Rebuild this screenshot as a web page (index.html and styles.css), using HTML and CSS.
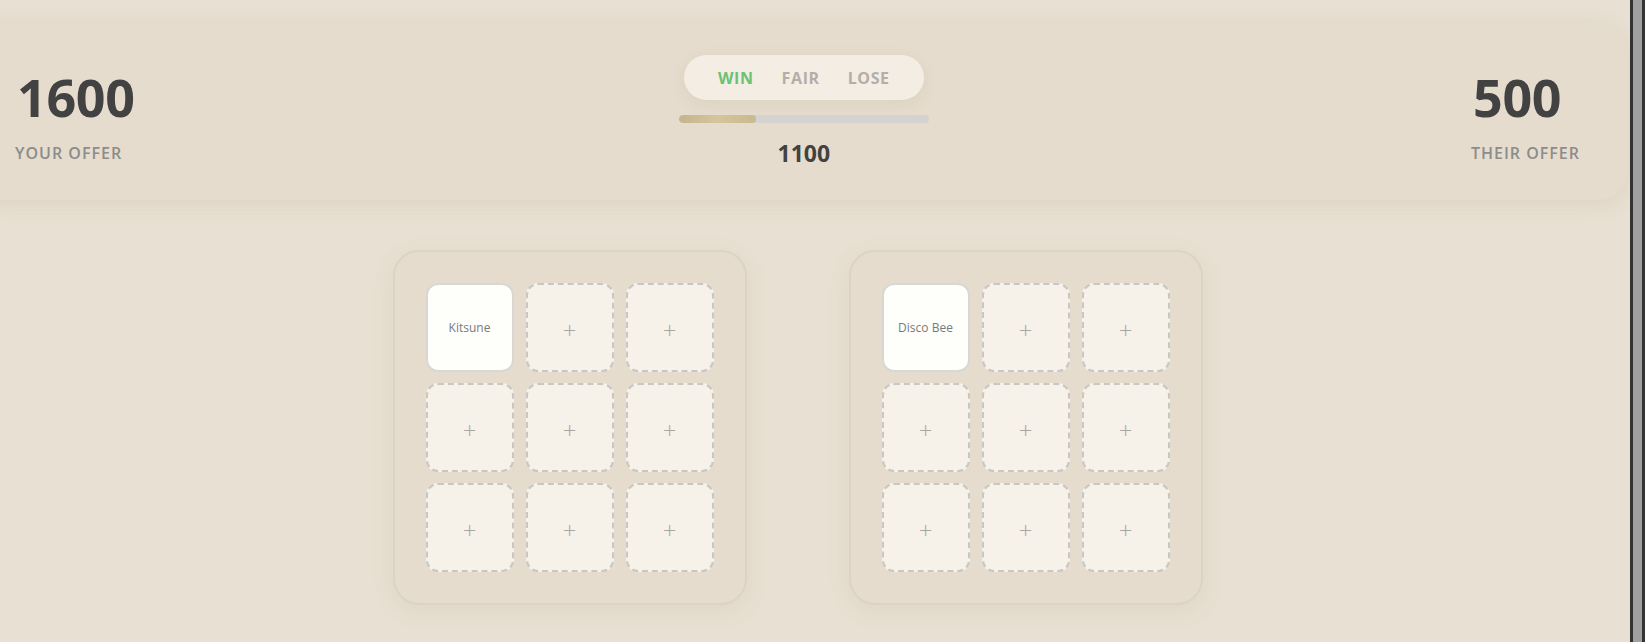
FILE: index.html
```html
<!DOCTYPE html>
<html lang="en">
<head>
<meta charset="utf-8">
<title>Trade</title>
<link rel="stylesheet" href="styles.css">
</head>
<body>
<div class="app">
  <header class="offer-card">
    <div class="offer">
      <div class="offer-value">1600</div>
      <div class="offer-label">YOUR OFFER</div>
    </div>
    <div class="verdict">
      <div class="pill">
        <span class="pill-item win">WIN</span>
        <span class="pill-item">FAIR</span>
        <span class="pill-item">LOSE</span>
      </div>
      <div class="bar"><div class="bar-fill" style="width:31%"></div></div>
      <div class="diff">1100</div>
    </div>
    <div class="offer">
      <div class="offer-value">500</div>
      <div class="offer-label">THEIR OFFER</div>
    </div>
  </header>
  <main class="boards">
    <section class="board">
      <div class="cell filled">Kitsune</div>
      <div class="cell">+</div>
      <div class="cell">+</div>
      <div class="cell">+</div>
      <div class="cell">+</div>
      <div class="cell">+</div>
      <div class="cell">+</div>
      <div class="cell">+</div>
      <div class="cell">+</div>
    </section>
    <section class="board">
      <div class="cell filled">Disco Bee</div>
      <div class="cell">+</div>
      <div class="cell">+</div>
      <div class="cell">+</div>
      <div class="cell">+</div>
      <div class="cell">+</div>
      <div class="cell">+</div>
      <div class="cell">+</div>
      <div class="cell">+</div>
    </section>
  </main>
</div>
<div class="edge"></div>
</body>
</html>
```
FILE: styles.css
```css
html, body {
  margin: 0;
  padding: 0;
  height: 100%;
}
body {
  display: flex;
  background: #e8e0d2;
  font-family: "Open Sans", "Noto Sans", sans-serif;
  overflow: hidden;
}
.app {
  flex: 1;
  margin-left: -33px;
  margin-right: 2px;
  min-width: 0;
}
.edge {
  width: 9px;
  flex: none;
  height: 100%;
  background: #a0a0a0;
  border-left: 3px solid #333333;
  border-right: 3px solid #333333;
}
.offer-card {
  margin-top: 23px;
  background: #e5dccd;
  border-radius: 30px;
  padding: 32px 48px 35px 50px;
  display: flex;
  justify-content: space-between;
  align-items: flex-start;
  box-shadow: 0 4px 22px rgba(120, 100, 70, 0.10);
}
.offer {
  margin-top: 16px;
  display: flex;
  flex-direction: column;
  align-items: flex-start;
}
.offer-value {
  font-size: 52px;
  line-height: 52px;
  font-weight: 700;
  color: #424242;
  letter-spacing: -0.3px;
}
.offer-label {
  margin-top: 22px;
  font-size: 16px;
  line-height: 16px;
  font-weight: 600;
  color: #8c8c8c;
  letter-spacing: 1px;
  margin-left: -2px;
}
.verdict {
  width: 250px;
  display: flex;
  flex-direction: column;
  align-items: center;
}
.pill {
  height: 45px;
  padding: 0 34px;
  border-radius: 23px;
  background: #f3ede3;
  display: flex;
  align-items: center;
  gap: 28px;
  box-shadow: 0 4px 16px rgba(120, 100, 70, 0.08);
}
.pill-item {
  font-size: 16px;
  font-weight: 700;
  letter-spacing: 0.6px;
  color: #b3aea8;
}
.pill-item.win {
  color: #6cc172;
}
.bar {
  margin-top: 15px;
  width: 250px;
  height: 8px;
  border-radius: 4px;
  background: #d4d3d1;
  overflow: hidden;
}
.bar-fill {
  height: 100%;
  border-radius: 4px;
  background: linear-gradient(90deg, #c6b58c, #d6c59c 50%, #c9b98f);
}
.diff {
  margin-top: 19px;
  font-size: 23px;
  line-height: 23px;
  font-weight: 700;
  color: #424242;
}
.boards {
  margin-top: 50px;
  display: flex;
  justify-content: center;
  gap: 102px;
}
.board {
  display: grid;
  grid-template-columns: repeat(3, 88px);
  grid-auto-rows: 89px;
  column-gap: 12px;
  row-gap: 11px;
  padding: 31px;
  border: 2px solid #dcd3c4;
  border-radius: 26px;
  background: #e5dccd;
  box-shadow: 0 6px 24px rgba(120, 100, 70, 0.08);
}
.cell {
  box-sizing: border-box;
  border: 2px dashed #c9c7c3;
  border-radius: 12px;
  background: #f6f2e9;
  display: flex;
  align-items: center;
  justify-content: center;
  font-size: 24px;
  font-weight: 300;
  color: #a9a7a3;
  padding-top: 4px;
}
.cell.filled {
  border: 2px solid #d9d7d3;
  background: #fefefb;
  font-size: 12px;
  font-weight: 400;
  color: #7a7a7a;
  padding-top: 0;
}
```
